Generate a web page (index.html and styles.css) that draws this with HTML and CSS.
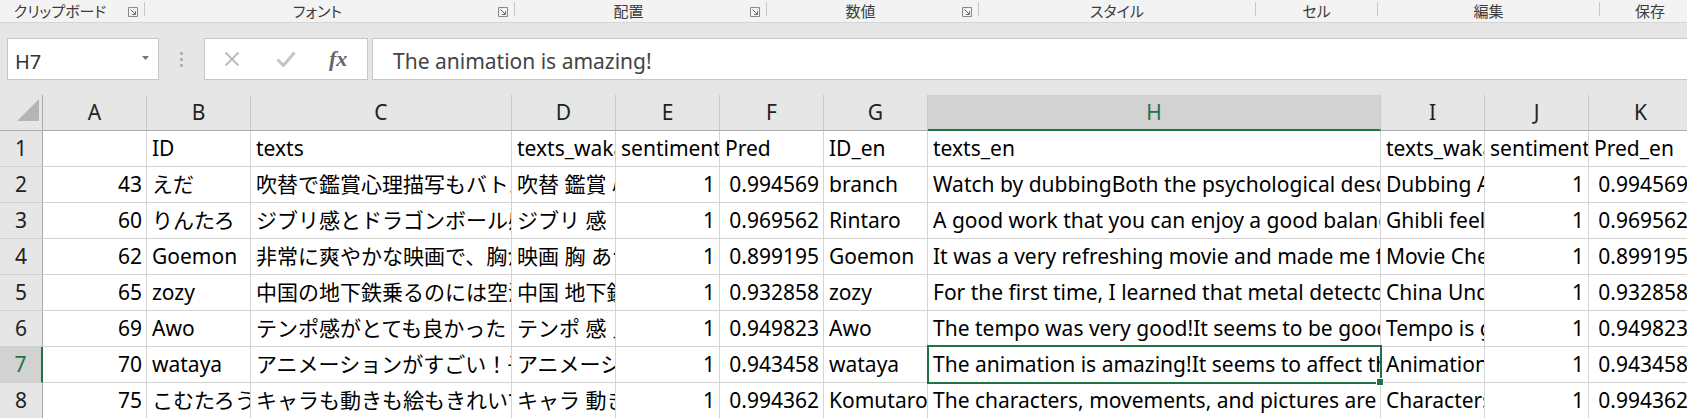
FILE: index.html
```html
<!DOCTYPE html>
<html lang="ja">
<head>
<meta charset="utf-8">
<title>Book1 - Excel</title>
<link rel="stylesheet" href="styles.css">
</head>
<body>
<div class="ribbon">
  <div class="group g1"><span class="glabel">クリップボード</span><svg class="launcher" width="10" height="10" viewBox="0 0 10 10"><path d="M.5 .5h9v9h-9z" fill="none" stroke="#8a8a8a"/><path d="M2.5 2.5l4.5 4.5M7.5 4.2v3.3H4.2" fill="none" stroke="#6a6a6a"/></svg></div>
  <span class="sep"></span>
  <div class="group g2"><span class="glabel">フォント</span><svg class="launcher" width="10" height="10" viewBox="0 0 10 10"><path d="M.5 .5h9v9h-9z" fill="none" stroke="#8a8a8a"/><path d="M2.5 2.5l4.5 4.5M7.5 4.2v3.3H4.2" fill="none" stroke="#6a6a6a"/></svg></div>
  <span class="sep"></span>
  <div class="group g3"><span class="glabel">配置</span><svg class="launcher" width="10" height="10" viewBox="0 0 10 10"><path d="M.5 .5h9v9h-9z" fill="none" stroke="#8a8a8a"/><path d="M2.5 2.5l4.5 4.5M7.5 4.2v3.3H4.2" fill="none" stroke="#6a6a6a"/></svg></div>
  <span class="sep"></span>
  <div class="group g4"><span class="glabel">数値</span><svg class="launcher" width="10" height="10" viewBox="0 0 10 10"><path d="M.5 .5h9v9h-9z" fill="none" stroke="#8a8a8a"/><path d="M2.5 2.5l4.5 4.5M7.5 4.2v3.3H4.2" fill="none" stroke="#6a6a6a"/></svg></div>
  <span class="sep"></span>
  <div class="group g5"><span class="glabel">スタイル</span></div>
  <span class="sep"></span>
  <div class="group g6"><span class="glabel">セル</span></div>
  <span class="sep"></span>
  <div class="group g7"><span class="glabel">編集</span></div>
  <span class="sep"></span>
  <div class="group g8"><span class="glabel">保存</span></div>
</div>

<div class="fbar">
  <div class="namebox">
    <span class="nbtext">H7</span>
    <svg class="nbarrow" width="7" height="4" viewBox="0 0 7 4"><path d="M0 0h7L3.5 4z" fill="#777"/></svg>
  </div>
  <div class="dots"><span class="dot"></span><span class="dot"></span><span class="dot"></span></div>
  <div class="fxbox">
    <svg class="ico-x" width="16" height="16" viewBox="0 0 16 16"><path d="M1.5 1.5l13 13M14.5 1.5l-13 13" stroke="#bdbdbd" stroke-width="2" fill="none"/></svg>
    <svg class="ico-check" width="20" height="16" viewBox="0 0 20 16"><path d="M1.5 8.5l6 6L18.5 1.5" stroke="#c4c4c4" stroke-width="3" fill="none"/></svg>
    <span class="fx">fx</span>
  </div>
  <div class="formula">The animation is amazing!</div>
</div>

<div class="sheet">
  <div class="corner"><svg width="22" height="22" viewBox="0 0 22 22"><path d="M22 0V22H0z" fill="#b5b5b5"/></svg></div>
  <div class="ch">A</div><div class="ch">B</div><div class="ch">C</div><div class="ch">D</div><div class="ch">E</div><div class="ch">F</div><div class="ch">G</div><div class="ch on">H</div><div class="ch">I</div><div class="ch">J</div><div class="ch">K</div>

  <div class="rh">1</div>
  <div class="c"></div><div class="c">ID</div><div class="c">texts</div><div class="c">texts_wakati</div><div class="c">sentiment</div><div class="c">Pred</div><div class="c">ID_en</div><div class="c">texts_en</div><div class="c">texts_wakati_en</div><div class="c">sentiment</div><div class="c">Pred_en</div>

  <div class="rh">2</div>
  <div class="c n">43</div><div class="c">えだ</div><div class="c">吹替で鑑賞心理描写もバトルも見応えがありました</div><div class="c">吹替 鑑賞 心理 描写 バトル</div><div class="c n">1</div><div class="c n">0.994569</div><div class="c">branch</div><div class="c">Watch by dubbingBoth the psychological description and the battle were worth seeing</div><div class="c">Dubbing Appreciation Psychology</div><div class="c n">1</div><div class="c n">0.994569</div>

  <div class="rh">3</div>
  <div class="c n">60</div><div class="c">りんたろ</div><div class="c">ジブリ感とドラゴンボール感がいい感じ</div><div class="c">ジブリ 感 ドラゴンボール</div><div class="c n">1</div><div class="c n">0.969562</div><div class="c">Rintaro</div><div class="c">A good work that you can enjoy a good balance of Ghibli and Dragon Ball</div><div class="c">Ghibli feeling Dragon Ball</div><div class="c n">1</div><div class="c n">0.969562</div>

  <div class="rh">4</div>
  <div class="c n">62</div><div class="c">Goemon</div><div class="c">非常に爽やかな映画で、胸があつくなりました</div><div class="c">映画 胸 あつく</div><div class="c n">1</div><div class="c n">0.899195</div><div class="c">Goemon</div><div class="c">It was a very refreshing movie and made me feel warm</div><div class="c">Movie Chest Hot</div><div class="c n">1</div><div class="c n">0.899195</div>

  <div class="rh">5</div>
  <div class="c n">65</div><div class="c">zozy</div><div class="c">中国の地下鉄乗るのには空港並みの検査が必要</div><div class="c">中国 地下鉄 乗る</div><div class="c n">1</div><div class="c n">0.932858</div><div class="c">zozy</div><div class="c">For the first time, I learned that metal detectors are needed in the subway</div><div class="c">China Underground Railway</div><div class="c n">1</div><div class="c n">0.932858</div>

  <div class="rh">6</div>
  <div class="c n">69</div><div class="c">Awo</div><div class="c">テンポ感がとても良かった！</div><div class="c">テンポ 感 良かっ</div><div class="c n">1</div><div class="c n">0.949823</div><div class="c">Awo</div><div class="c">The tempo was very good!It seems to be good for children</div><div class="c">Tempo is good</div><div class="c n">1</div><div class="c n">0.949823</div>

  <div class="rh on">7</div>
  <div class="c n">70</div><div class="c">wataya</div><div class="c">アニメーションがすごい！子供にも影響しそう</div><div class="c">アニメーション すごい</div><div class="c n">1</div><div class="c n">0.943458</div><div class="c">wataya</div><div class="c">The animation is amazing!It seems to affect the children</div><div class="c">Animation amazing</div><div class="c n">1</div><div class="c n">0.943458</div>

  <div class="rh">8</div>
  <div class="c n">75</div><div class="c">こむたろう</div><div class="c">キャラも動きも絵もきれいでした</div><div class="c">キャラ 動き 絵</div><div class="c n">1</div><div class="c n">0.994362</div><div class="c">Komutaro</div><div class="c">The characters, movements, and pictures are beautiful</div><div class="c">Characters Movement</div><div class="c n">1</div><div class="c n">0.994362</div>

  <div class="selection"><span class="handle"></span></div>
</div>
</body>
</html>
```

FILE: styles.css
```css
html, body {
  margin: 0;
  padding: 0;
}
body {
  width: 1687px;
  height: 418px;
  overflow: hidden;
  background: #e6e6e6;
  font-family: "Noto Sans", "Noto Sans CJK JP", sans-serif;
}

/* ribbon group labels */
.ribbon {
  display: flex;
  height: 22px;
  background: #f3f3f3;
  border-bottom: 1px solid #d5d5d5;
  font-family: "Noto Sans CJK JP", sans-serif;
  font-size: 15px;
  color: #3c3c3c;
  font-feature-settings: "palt";
}
.group {
  display: flex;
  align-items: center;
  flex: none;
}
.g1 { width: 144px; }
.g2 { width: 369px; }
.g3 { width: 251px; }
.g4 { width: 211px; }
.g5 { width: 276px; }
.g6 { width: 121px; }
.g7 { width: 221px; }
.g8 { width: 100px; }
.glabel {
  flex: 1;
  text-align: center;
  line-height: 22px;
  white-space: nowrap;
}
.launcher {
  display: block;
  flex: none;
  margin: 1px 6px 0 8px;
}
.sep {
  flex: none;
  width: 1px;
  height: 14px;
  margin-top: 2px;
  background: #c8c8c8;
}

/* formula bar */
.fbar {
  display: flex;
  height: 42px;
  margin: 15px 0;
  padding-left: 7px;
}
.namebox {
  flex: none;
  width: 152px;
  box-sizing: border-box;
  background: #fff;
  border: 1px solid #c6c6c6;
  display: flex;
  align-items: center;
}
.nbtext {
  flex: 1;
  padding: 5px 0 0 7px;
  line-height: 35px;
  font-size: 20px;
  color: #333;
}
.nbarrow {
  flex: none;
  margin: 0 9px 2px 0;
}
.dots {
  flex: none;
  width: 45px;
  display: flex;
  flex-direction: column;
  align-items: center;
  justify-content: center;
  gap: 3px;
}
.dot {
  width: 3px;
  height: 3px;
  background: #b4b4b4;
}
.fxbox {
  flex: none;
  width: 164px;
  box-sizing: border-box;
  background: #fff;
  border: 1px solid #c6c6c6;
  display: flex;
  align-items: center;
}
.ico-x { margin-left: 19px; flex: none; }
.ico-check { margin-left: 36px; flex: none; }
.fx {
  margin-left: 33px;
  font-family: "Liberation Serif", serif;
  font-style: italic;
  font-weight: bold;
  font-size: 22px;
  color: #666;
}
.formula {
  flex: 1;
  margin-left: 4px;
  margin-right: -3px;
  box-sizing: border-box;
  background: #fff;
  border: 1px solid #c6c6c6;
  padding: 5px 0 0 20px;
  line-height: 35px;
  font-size: 21px;
  color: #444;
  white-space: nowrap;
  overflow: hidden;
}

/* worksheet grid */
.sheet {
  position: relative;
  display: grid;
  grid-template-columns: 43px 104px 104px 261px 104px 104px 104px 104px 453px 104px 104px 104px;
  grid-auto-rows: 36px;
  width: 1693px;
  background: #fff;
  font-size: 21px;
  color: #000;
}
.sheet > div {
  box-sizing: border-box;
}
.corner {
  background: #e6e6e6;
  border-right: 1px solid #ababab;
  border-bottom: 1px solid #ababab;
  display: flex;
  justify-content: flex-end;
  align-items: flex-end;
  padding: 0 3px 9px 0;
}
.ch {
  background: #e6e6e6;
  border-right: 1px solid #c8c8c8;
  border-bottom: 1px solid #ababab;
  text-align: center;
  line-height: 35px;
  color: #222;
}
.ch.on {
  background: #d2d2d2;
  color: #217346;
  border-bottom: 2px solid #217346;
  line-height: 34px;
}
.rh {
  background: #e6e6e6;
  border-right: 1px solid #ababab;
  border-bottom: 1px solid #d0d0d0;
  text-align: center;
  line-height: 35px;
  color: #222;
}
.rh.on {
  background: #d2d2d2;
  color: #217346;
  border-right: 2px solid #217346;
}
.c {
  border-right: 1px solid #d4d4d4;
  border-bottom: 1px solid #d4d4d4;
  padding: 0 4px 0 5px;
  line-height: 35px;
  white-space: nowrap;
  overflow: hidden;
}
.n {
  text-align: right;
}
.selection {
  position: absolute;
  left: 927px;
  top: 250px;
  width: 455px;
  height: 39px;
  box-sizing: border-box;
  border: 2px solid #217346;
  pointer-events: none;
}
.handle {
  position: absolute;
  right: -4px;
  bottom: -4px;
  width: 6px;
  height: 6px;
  background: #217346;
  border: 1px solid #fff;
}
```
